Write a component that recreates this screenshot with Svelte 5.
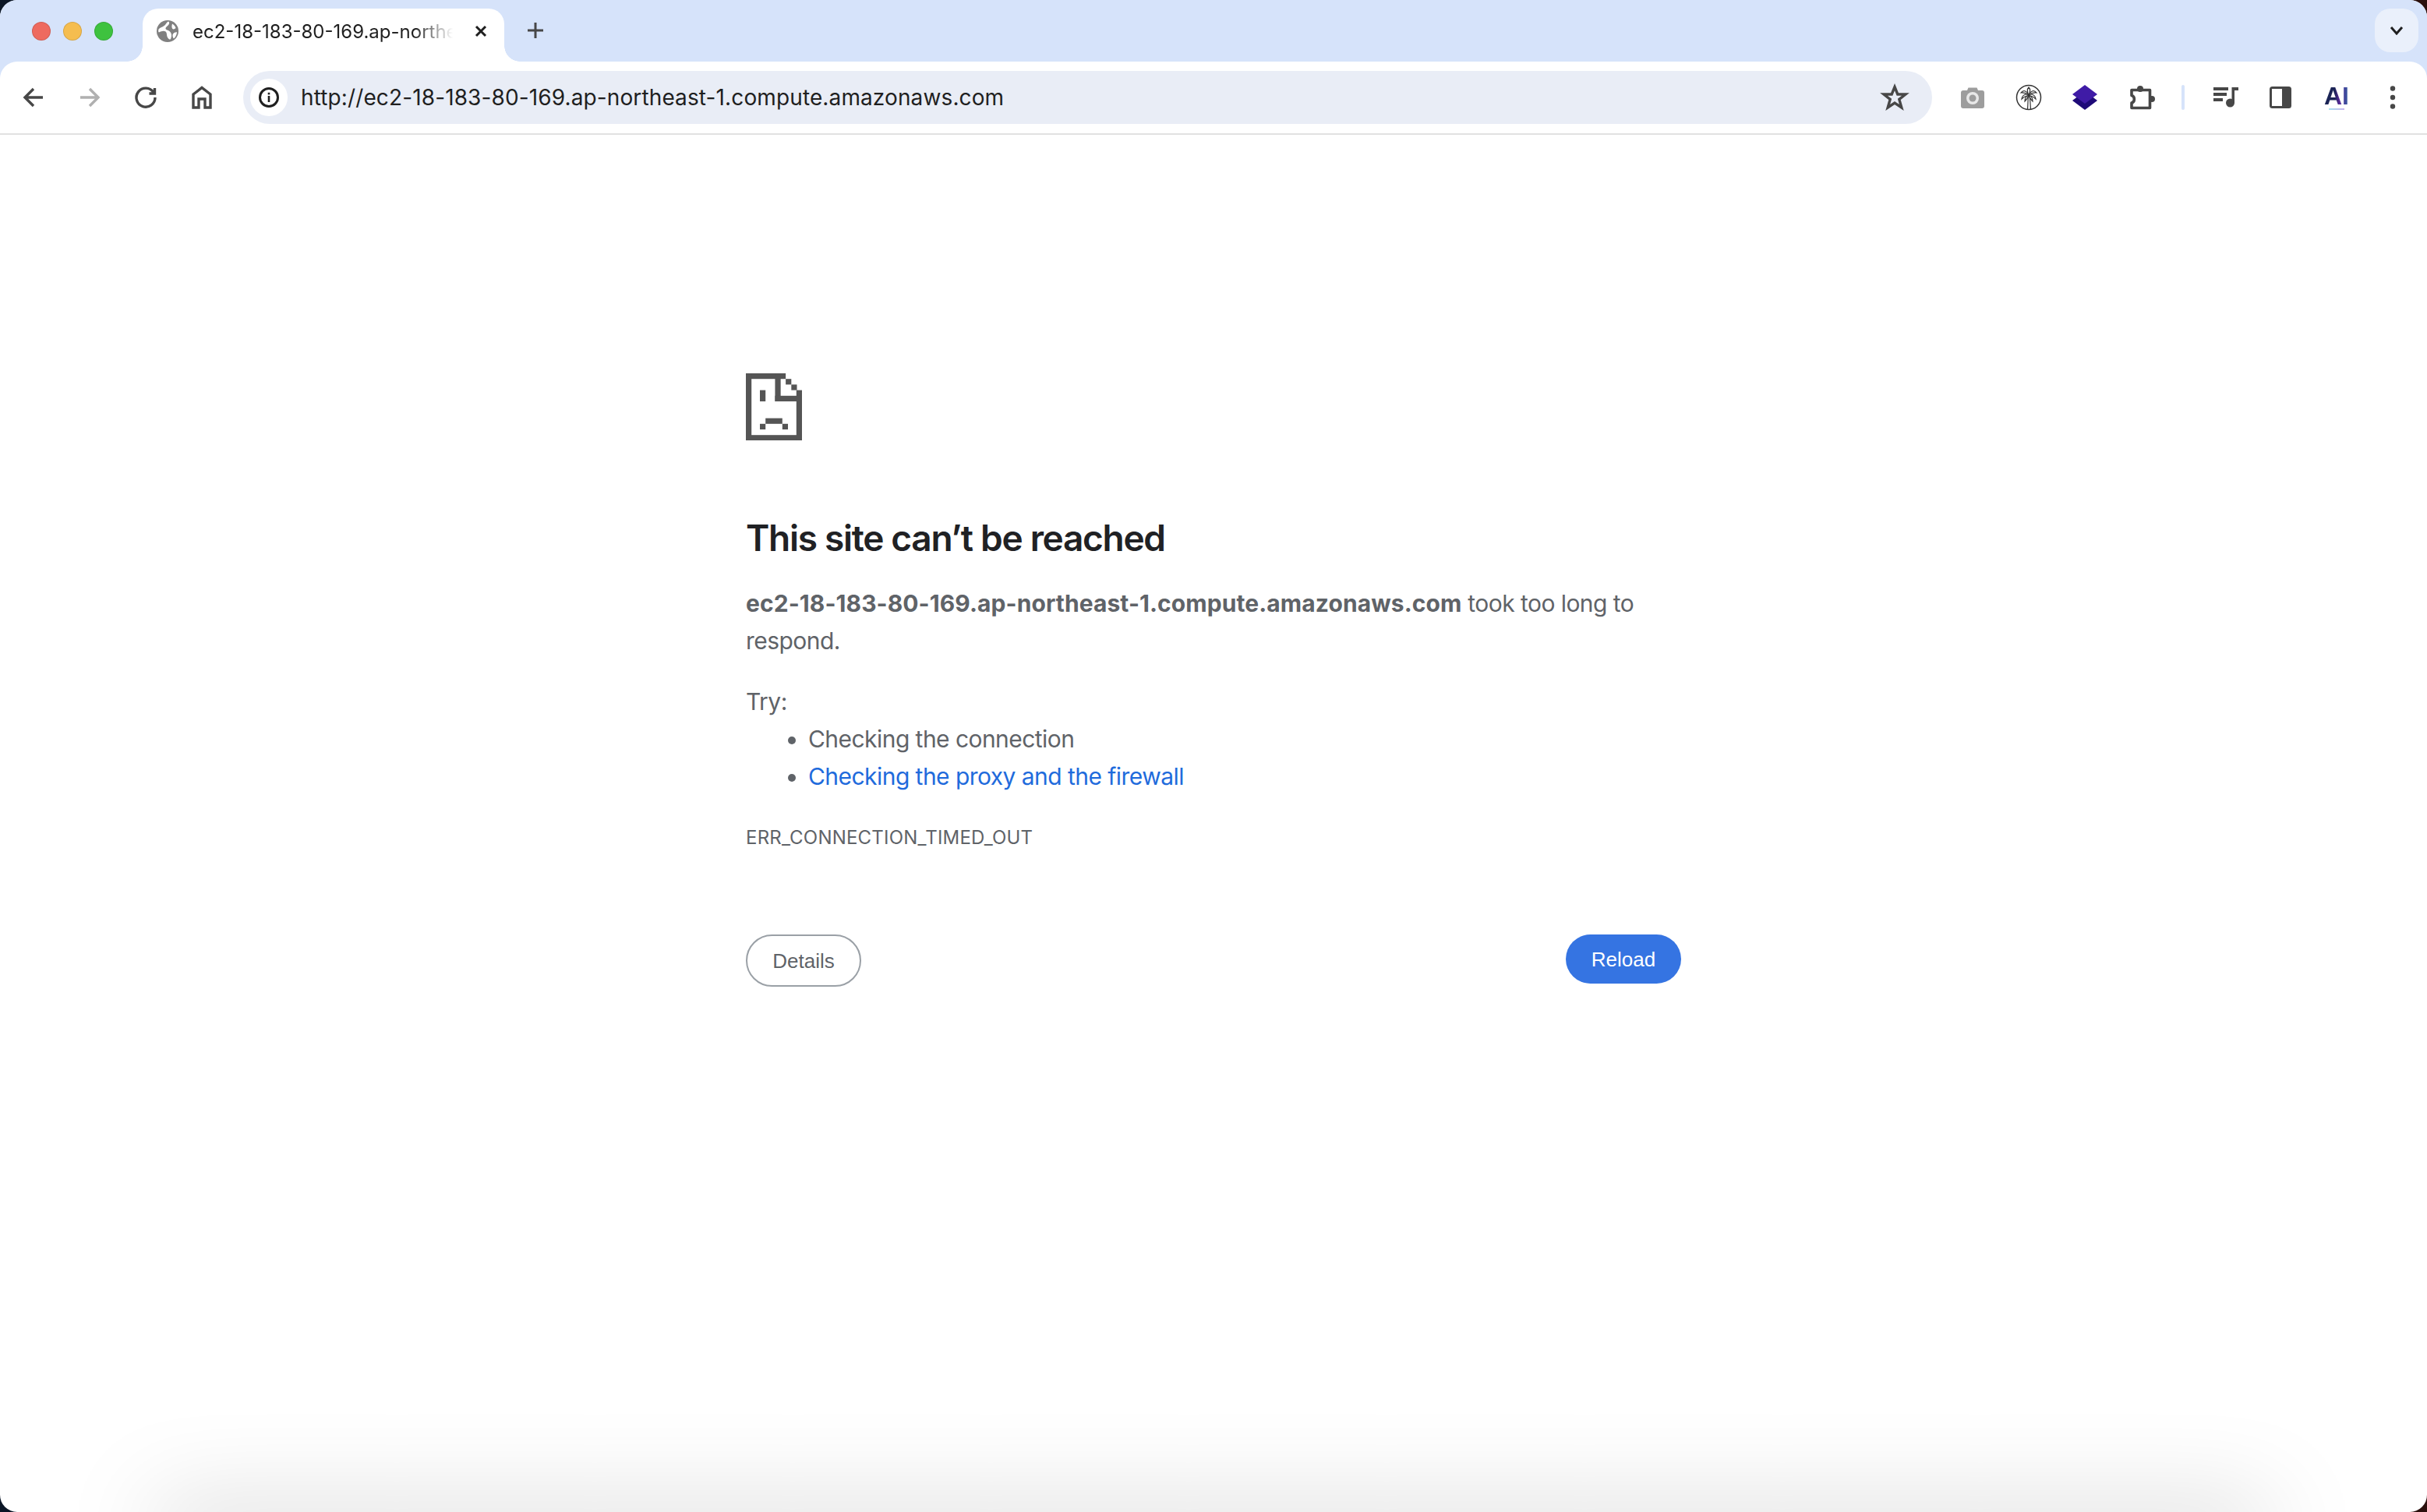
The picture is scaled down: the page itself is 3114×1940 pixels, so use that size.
<script>
  const pixels = [
    [0,0,7.1,1],[0,0,1,12],[0,11,10,1],[9,3,1,9],[5.2,0,1,5],[5.2,4,4.8,1],
    [7.1,1,1,1],[8.1,2,1,1],[2.5,3,1,2],[3.5,8,3,1],[2.5,9,1,1],[6.5,9,1,1]
  ];
</script>

<div class="window">
  <header class="chrome">
    <div class="strip">
      <div class="lights">
        <span class="light red"></span>
        <span class="light yellow"></span>
        <span class="light green"></span>
      </div>
      <div class="tab">
        <svg class="favicon" viewBox="0 0 28 28" aria-hidden="true">
          <circle cx="14" cy="14" r="14" fill="#808080" />
          <path d="M15 1.500C12 3 12 6 9 7.500C7 9 4 9.500 2.500 11.500C2 13 2 15 3 15.500C6 14 9 13 11.500 14.500C13.500 16 12.500 19 14 22C15 24 17 25.500 18 24C19.500 21 19.500 17 17 14.500C15 12.500 11 12.500 11.500 10C12 8 15 7 16 4.500C16.500 3 16 2 15 1.500Z" fill="#fff" />
          <path d="M20 4.500C22.500 6 24 8 24.500 10C23 11.500 21 12 20 10.500C19 8.500 19.500 6.500 20 4.500ZM21 17.500C22.500 16 24.500 15 26 15.500C25.800 18.500 24 22 22 23.500C20.500 22 20 19 21 17.500Z" fill="#fff" />
        </svg>
        <span class="tab-title">ec2-18-183-80-169.ap-northeast-1.compute.amazonaws.com</span>
        <svg class="tab-close" viewBox="0 0 20 20" aria-hidden="true">
          <path d="M4 4L16 16M16 4L4 16" />
        </svg>
      </div>
      <svg class="new-tab" viewBox="0 0 24 24" aria-hidden="true">
        <path d="M12 2V22M2 12H22" />
      </svg>
      <div class="tab-search">
        <svg viewBox="0 0 20 20" aria-hidden="true"><path d="M3 6L10 14L17 6" /></svg>
      </div>
    </div>

    <div class="toolbar">
      <div class="tools nav">
        <span class="tool"><svg class="line" viewBox="0 0 40 40"><path d="M32 20H10M20 9L9 20L20 31" /></svg></span>
        <span class="tool"><svg class="line off" viewBox="0 0 40 40"><path d="M8 20H30M20 9L31 20L20 31" /></svg></span>
        <span class="tool"><svg class="line" viewBox="0 0 40 40"><path d="M30 13.500A12 12 0 1 0 32 20M31.500 8V15H24.500" /></svg></span>
        <span class="tool"><svg class="line" viewBox="0 0 40 40"><path d="M9 33V16L20 7.500L31 16V33H24V22H16V33Z" /></svg></span>
      </div>

      <div class="omnibox">
        <span class="site-info">
          <svg viewBox="0 0 28 28" aria-hidden="true">
            <circle cx="14" cy="14" r="11.500" fill="none" stroke="#1f1f1f" stroke-width="3" />
            <rect x="12.700" y="12" width="2.600" height="8" fill="#1f1f1f" />
            <rect x="12.700" y="7.800" width="2.600" height="2.600" fill="#1f1f1f" />
          </svg>
        </span>
        <span class="url">http://ec2-18-183-80-169.ap-northeast-1.compute.amazonaws.com</span>
        <svg class="star" viewBox="0 0 40 40" aria-hidden="true">
          <path d="M20 6.500L23.800 16H34L25.800 22.500L28.800 33L20 27L11.200 33L14.200 22.500L6 16H16.200Z" />
        </svg>
      </div>

      <div class="tools ext">
        <span class="tool">
          <svg viewBox="0 0 40 40">
            <path d="M8 11H13L14.500 7.500H25.500L27 11H32A3 3 0 0 1 35 14V31A3 3 0 0 1 32 34H8A3 3 0 0 1 5 31V14A3 3 0 0 1 8 11Z" fill="#9d9d9d" />
            <circle cx="20" cy="21" r="8" fill="#e8e8e8" />
            <circle cx="20" cy="21" r="4.500" fill="#9d9d9d" />
          </svg>
        </span>
        <span class="tool">
          <svg viewBox="0 0 40 40" fill="none" stroke="#333" stroke-width="1.200">
            <circle cx="20" cy="20" r="15.500" stroke-width="1.500" />
            <path d="M18.500 35C19 29 19 23 19.500 17M22.500 35C22 29 22 23 20.800 17" />
            <path d="M20 17C17 11 13 10 10 14C13 13.500 16 14 20 17ZM20 17C23 11 27 10 30 14C27 13.500 24 14 20 17ZM20 17C17 15 12 16 11 22C14 19 17 18 20 17ZM20 17C23 15 28 16 29 22C26 19 23 18 20 17ZM20 17C18 13 18 9 20 7C22 9 22 13 20 17ZM20 17C17 18 15 21 15 25C17 23 19 20 20 17ZM20 17C23 18 25 21 25 25C23 23 21 20 20 17Z" />
          </svg>
        </span>
        <span class="tool">
          <svg viewBox="0 0 40 40">
            <path d="M20 12L36 24L20 36L4 24Z" fill="#1e0a78" />
            <path d="M20 4L36 16L20 28L4 16Z" fill="#3f1ba6" />
          </svg>
        </span>
        <span class="tool">
          <svg viewBox="0 0 40 40">
            <circle cx="19" cy="9" r="4" fill="#474747" />
            <circle cx="34" cy="22" r="4" fill="#474747" />
            <path d="M8 10.500H31.500V33.500H8V27C12.500 26 12.500 18.500 8 17.500Z" fill="none" stroke="#474747" stroke-width="3.600" stroke-linejoin="round" />
          </svg>
        </span>
        <span class="divider"></span>
        <span class="tool">
          <svg viewBox="0 0 40 40">
            <path d="M6 7H25V11H6ZM6 14H23V18H6ZM6 21H18V25H6Z" fill="#474747" />
            <path d="M29.500 7H38V11H33V27H29.500Z" fill="#474747" />
            <circle cx="27.500" cy="27" r="5.500" fill="#474747" />
          </svg>
        </span>
        <span class="tool">
          <svg viewBox="0 0 40 40">
            <rect x="6" y="6" width="28" height="28" rx="3.500" fill="#474747" />
            <rect x="9" y="9" width="13" height="22" fill="#fff" />
          </svg>
        </span>
        <span class="tool ai">
          <span class="ai-mark">AI</span>
          <span class="ai-sub"></span>
        </span>
        <span class="tool">
          <svg viewBox="0 0 40 40">
            <circle cx="20" cy="8.500" r="3.200" fill="#474747" />
            <circle cx="20" cy="20" r="3.200" fill="#474747" />
            <circle cx="20" cy="31.500" r="3.200" fill="#474747" />
          </svg>
        </span>
      </div>
    </div>
  </header>

  <main class="page">
    <div class="error">
      <svg class="sad-page" viewBox="0 0 10 12" aria-hidden="true">
        {#each pixels as [x, y, w, h]}
          <rect {x} {y} width={w} height={h} />
        {/each}
      </svg>
      <h1>This site can’t be reached</h1>
      <p class="summary"><strong>ec2-18-183-80-169.ap-northeast-1.compute.amazonaws.com</strong> took too long to respond.</p>
      <p class="try">Try:</p>
      <ul>
        <li>Checking the connection</li>
        <li><a href="#proxy">Checking the proxy and the firewall</a></li>
      </ul>
      <div class="code">ERR_CONNECTION_TIMED_OUT</div>
      <div class="actions">
        <button class="details">Details</button>
        <button class="reload">Reload</button>
      </div>
    </div>
  </main>

  <div class="dock-shadow"></div>
</div>

<style>
  :global(body) {
    margin: 0;
    background: linear-gradient(90deg, #0b1626 0 50%, #2a0f0c 100%);
  }
  .window {
    position: relative;
    width: 3114px;
    height: 1940px;
    overflow: hidden;
    border-radius: 22px;
    background: #fff;
    font-family: Inter, "Liberation Sans", sans-serif;
  }
  .chrome { background: #d6e3fa; }
  .strip {
    display: flex;
    align-items: flex-end;
    height: 79px;
    position: relative;
  }
  .lights {
    display: flex;
    gap: 16px;
    align-self: flex-start;
    width: 183px;
    box-sizing: border-box;
    padding: 28px 0 0 41px;
  }
  .light {
    width: 24px;
    height: 24px;
    border-radius: 50%;
    box-sizing: border-box;
    border: 1px solid rgba(0, 0, 0, 0.12);
  }
  .red { background: #ee6a5f; }
  .yellow { background: #f5bd4f; }
  .green { background: #3ec23f; }
  .tab {
    position: relative;
    display: flex;
    align-items: center;
    width: 464px;
    height: 68px;
    box-sizing: border-box;
    padding: 0 20px 10px 18px;
    background: #fff;
    border-radius: 20px 20px 0 0;
  }
  .tab::before,
  .tab::after {
    content: "";
    position: absolute;
    bottom: 0;
    width: 20px;
    height: 20px;
  }
  .tab::before {
    left: -20px;
    background: radial-gradient(circle at 0 0, transparent 19.500px, #fff 20px);
  }
  .tab::after {
    right: -20px;
    background: radial-gradient(circle at 100% 0, transparent 19.500px, #fff 20px);
  }
  .favicon { width: 28px; height: 28px; flex: none; }
  .tab-title {
    margin-left: 18px;
    width: 335px;
    overflow: hidden;
    white-space: nowrap;
    font-size: 24px;
    color: #1f1f1f;
    -webkit-mask-image: linear-gradient(90deg, #000 85%, transparent 100%);
    mask-image: linear-gradient(90deg, #000 85%, transparent 100%);
  }
  .tab-close {
    width: 20px;
    height: 20px;
    margin-left: 26px;
    flex: none;
    fill: none;
    stroke: #1f1f1f;
    stroke-width: 3;
  }
  .new-tab {
    width: 24px;
    height: 24px;
    margin: 0 0 28px 28px;
    fill: none;
    stroke: #474747;
    stroke-width: 3;
  }
  .tab-search {
    position: absolute;
    top: 11px;
    right: 11px;
    display: flex;
    align-items: center;
    justify-content: center;
    width: 56px;
    height: 56px;
    border-radius: 20px;
    background: #eaf0fb;
  }
  .tab-search svg {
    width: 20px;
    height: 20px;
    fill: none;
    stroke: #1f1f1f;
    stroke-width: 3;
  }
  .toolbar {
    display: flex;
    align-items: center;
    box-sizing: border-box;
    height: 94px;
    background: #fff;
    border-bottom: 2px solid #e1e1e1;
    border-radius: 22px 22px 0 0;
    padding: 0 8px 0 7px;
  }
  .tools { display: flex; align-items: center; flex: none; }
  .tool {
    display: flex;
    flex-direction: column;
    align-items: center;
    justify-content: center;
    width: 72px;
    height: 72px;
  }
  .tool svg { width: 40px; height: 40px; }
  .line {
    fill: none;
    stroke: #474747;
    stroke-width: 3.400;
  }
  .line.off { stroke: #b0b0b0; }
  .omnibox {
    display: flex;
    align-items: center;
    flex: 1;
    height: 68px;
    margin: 0 16px 0 17px;
    border-radius: 34px;
    background: #e9edf6;
    padding: 0 28px 0 9px;
  }
  .site-info {
    display: flex;
    align-items: center;
    justify-content: center;
    width: 48px;
    height: 48px;
    border-radius: 50%;
    background: #fff;
    flex: none;
  }
  .site-info svg { width: 28px; height: 28px; }
  .url {
    margin-left: 17px;
    flex: 1;
    font-size: 28px;
    letter-spacing: 0.12px;
    color: #1f1f1f;
    white-space: nowrap;
  }
  .star {
    width: 40px;
    height: 40px;
    fill: none;
    stroke: #474747;
    stroke-width: 3.400;
  }
  .divider {
    width: 4px;
    height: 32px;
    border-radius: 2px;
    background: #d6e3fa;
    margin: 0 16px;
  }
  .ext .divider + .tool { margin-left: -1px; }
  .ai-mark {
    font: 700 32px/26px "Liberation Sans", sans-serif;
    background: linear-gradient(90deg, #1b2456 0 42%, #5a2a9a 62%, #2f5d9e 100%);
    -webkit-background-clip: text;
    background-clip: text;
    color: transparent;
  }
  .ai-sub {
    width: 20px;
    height: 2px;
    margin-top: 3px;
    background: linear-gradient(90deg, #a8e0ec, #c6b2ee);
  }
  .page { display: flex; justify-content: center; }
  .error {
    width: 1200px;
    padding-top: 306px;
    color: #5f6368;
    font-size: 30px;
    letter-spacing: -0.55px;
    line-height: 48px;
  }
  .sad-page { display: block; width: 72px; height: 86.400px; fill: #555; }
  h1 {
    margin: 95px 0 30px;
    color: #202124;
    font-size: 46px;
    line-height: 60px;
    font-weight: 600;
    letter-spacing: -1.3px;
  }
  p { margin: 0; }
  .summary strong { font-weight: 700; letter-spacing: 0.08px; }
  .try { margin-top: 30px; }
  ul { margin: 0; padding: 0 0 0 80px; }
  a { color: #1f6bdc; text-decoration: none; }
  .code {
    margin-top: 37px;
    font-size: 24px;
    letter-spacing: 0.2px;
    line-height: 36px;
  }
  .actions {
    display: flex;
    justify-content: space-between;
    align-items: flex-start;
    margin-top: 106px;
  }
  button {
    font: 26px/1 "Liberation Sans", Arial, sans-serif;
    border-radius: 34px;
    padding: 0;
  }
  .details {
    width: 148px;
    height: 67px;
    background: #fff;
    border: 2px solid #9aa0a6;
    color: #5f6368;
  }
  .reload {
    width: 148px;
    height: 63px;
    background: #3574e2;
    border: 0;
    color: #fff;
  }
  .dock-shadow {
    position: absolute;
    left: 200px;
    right: 204px;
    top: 1940px;
    height: 40px;
    box-shadow: 0 0 120px rgba(0, 0, 0, 0.25);
  }
</style>
